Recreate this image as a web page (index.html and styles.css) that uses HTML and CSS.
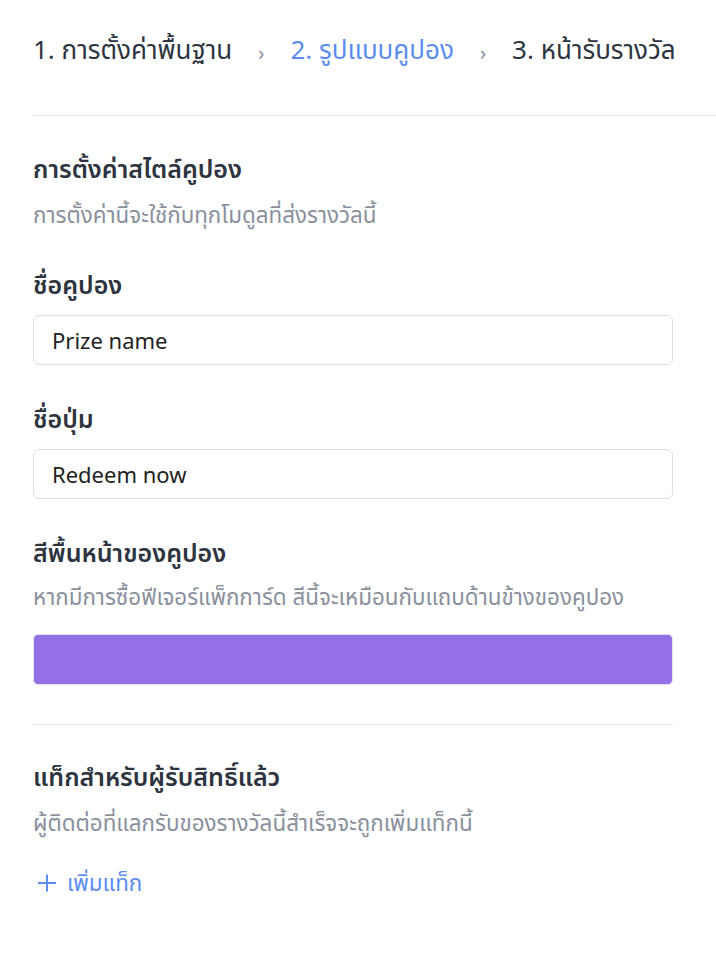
FILE: index.html
```html
<!DOCTYPE html>
<html lang="th">
<head>
    <meta charset="UTF-8">
    <meta name="viewport" content="width=device-width, initial-scale=1.0">
    <title>รูปแบบคูปอง</title>
    <link rel="stylesheet" href="styles.css">
</head>
<body>
    <nav class="steps">
        <span class="step">1. การตั้งค่าพื้นฐาน</span>
        <span class="step-sep">›</span>
        <span class="step active">2. รูปแบบคูปอง</span>
        <span class="step-sep">›</span>
        <span class="step">3. หน้ารับรางวัล</span>
    </nav>

    <div class="panel">
        <section class="group">
            <h2 class="group-title">การตั้งค่าสไตล์คูปอง</h2>
            <p class="group-help">การตั้งค่านี้จะใช้กับทุกโมดูลที่ส่งรางวัลนี้</p>

            <div class="field">
                <label for="prizeName">ชื่อคูปอง</label>
                <input type="text" id="prizeName" class="text-input" value="Prize name">
            </div>

            <div class="field">
                <label for="buttonName">ชื่อปุ่ม</label>
                <input type="text" id="buttonName" class="text-input" value="Redeem now">
            </div>

            <div class="field">
                <label>สีพื้นหน้าของคูปอง</label>
                <p class="field-help">หากมีการซื้อฟีเจอร์แพ็กการ์ด สีนี้จะเหมือนกับแถบด้านข้างของคูปอง</p>
                <div class="color-swatch"></div>
            </div>
        </section>

        <section class="group tags">
            <h2 class="group-title">แท็กสำหรับผู้รับสิทธิ์แล้ว</h2>
            <p class="group-help">ผู้ติดต่อที่แลกรับของรางวัลนี้สำเร็จจะถูกเพิ่มแท็กนี้</p>
            <button class="add-tag">
                <svg width="20" height="20" viewBox="0 0 20 20"><path d="M10 1.5v17M1 10h18" stroke="currentColor" stroke-width="2" fill="none"/></svg>
                เพิ่มแท็ก
            </button>
        </section>
    </div>
</body>
</html>
```

FILE: styles.css
```css
body {
    margin: 0;
    padding: 0;
    font-family: "Noto Sans", "Noto Sans Thai", sans-serif;
    background-color: #fff;
    color: #2d3440;
}

.steps {
    display: flex;
    align-items: center;
    gap: 26px;
    height: 116px;
    margin-left: 33px;
    border-bottom: 1px solid #e6e8eb;
    font-size: 26px;
    box-sizing: border-box;
    padding-bottom: 14px;
}

.step {
    color: #2d3440;
    white-space: nowrap;
}

.step.active {
    color: #5b8def;
}

.step-sep {
    color: #8a909c;
    font-size: 20px;
    padding-top: 3px;
}

.panel {
    padding: 0 43px 0 33px;
}

.group {
    padding-top: 34px;
}

.group-title {
    margin: 0;
    font-size: 25px;
    font-weight: 600;
    line-height: 36px;
}

.group-help,
.field-help {
    margin: 13px 0 0;
    font-size: 22.4px;
    line-height: 32px;
    color: #8a909c;
}

.field {
    display: flex;
    flex-direction: column;
    margin-top: 35px;
}

.field label {
    font-size: 25px;
    font-weight: 600;
    line-height: 36px;
}

.field .field-help {
    margin-top: 11px;
}

.text-input {
    margin-top: 13px;
    height: 50px;
    box-sizing: border-box;
    padding: 0 18px;
    border: 1px solid #dcdee2;
    border-radius: 6px;
    font-family: "Noto Sans", sans-serif;
    font-size: 22px;
    color: #222;
}

.color-swatch {
    margin-top: 21px;
    height: 51px;
    box-sizing: border-box;
    border: 1px solid #e3e0f3;
    border-radius: 5px;
    background-color: #9370e6;
}

.tags {
    margin-top: 39px;
    padding-top: 33px;
    border-top: 1px solid #e6e8eb;
}

.add-tag {
    display: flex;
    align-items: center;
    gap: 10px;
    margin-top: 28px;
    padding: 0 0 0 4px;
    border: none;
    background: none;
    font-family: inherit;
    font-size: 22.4px;
    line-height: 32px;
    color: #5b8def;
    cursor: pointer;
}
```
